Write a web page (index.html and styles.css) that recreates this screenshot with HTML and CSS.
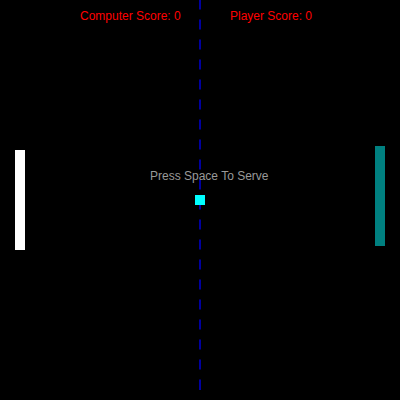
FILE: index.html
```html
<!DOCTYPE html>
<html>
<head>
<meta charset="utf-8">
<link rel="stylesheet" href="styles.css">
</head>
<body>
<div class="court">
  <div class="net"></div>
  <div class="score score-computer">Computer Score: 0</div>
  <div class="score score-player">Player Score: 0</div>
  <div class="paddle paddle-left"></div>
  <div class="paddle paddle-right"></div>
  <div class="message">Press Space To Serve</div>
  <div class="ball"></div>
</div>
</body>
</html>
```

FILE: styles.css
```css
html, body {
  margin: 0;
  padding: 0;
  background: #000;
}
.court {
  position: relative;
  width: 400px;
  height: 400px;
  background: #000;
  overflow: hidden;
  font-family: "Liberation Sans", Arial, sans-serif;
  font-size: 12px;
  line-height: 14px;
}
.net {
  position: absolute;
  left: 199px;
  top: 0;
  width: 2px;
  height: 390px;
  background: repeating-linear-gradient(to bottom, #0000a0 0, #0000a0 10px, transparent 10px, transparent 20px);
  background-position: 0 -0.5px;
}
.score {
  position: absolute;
  top: 9px;
  color: #ff0000;
  white-space: nowrap;
}
.score-computer { left: 80px; }
.score-player { left: 230px; }
.paddle {
  position: absolute;
  width: 10px;
  height: 100px;
}
.paddle-left {
  left: 15px;
  top: 150px;
  background: #ffffff;
}
.paddle-right {
  left: 375px;
  top: 146px;
  background: #008080;
}
.message {
  position: absolute;
  left: 150px;
  top: 169px;
  color: #999999;
  white-space: nowrap;
}
.ball {
  position: absolute;
  left: 195px;
  top: 195px;
  width: 10px;
  height: 10px;
  background: #00ffff;
}
```
